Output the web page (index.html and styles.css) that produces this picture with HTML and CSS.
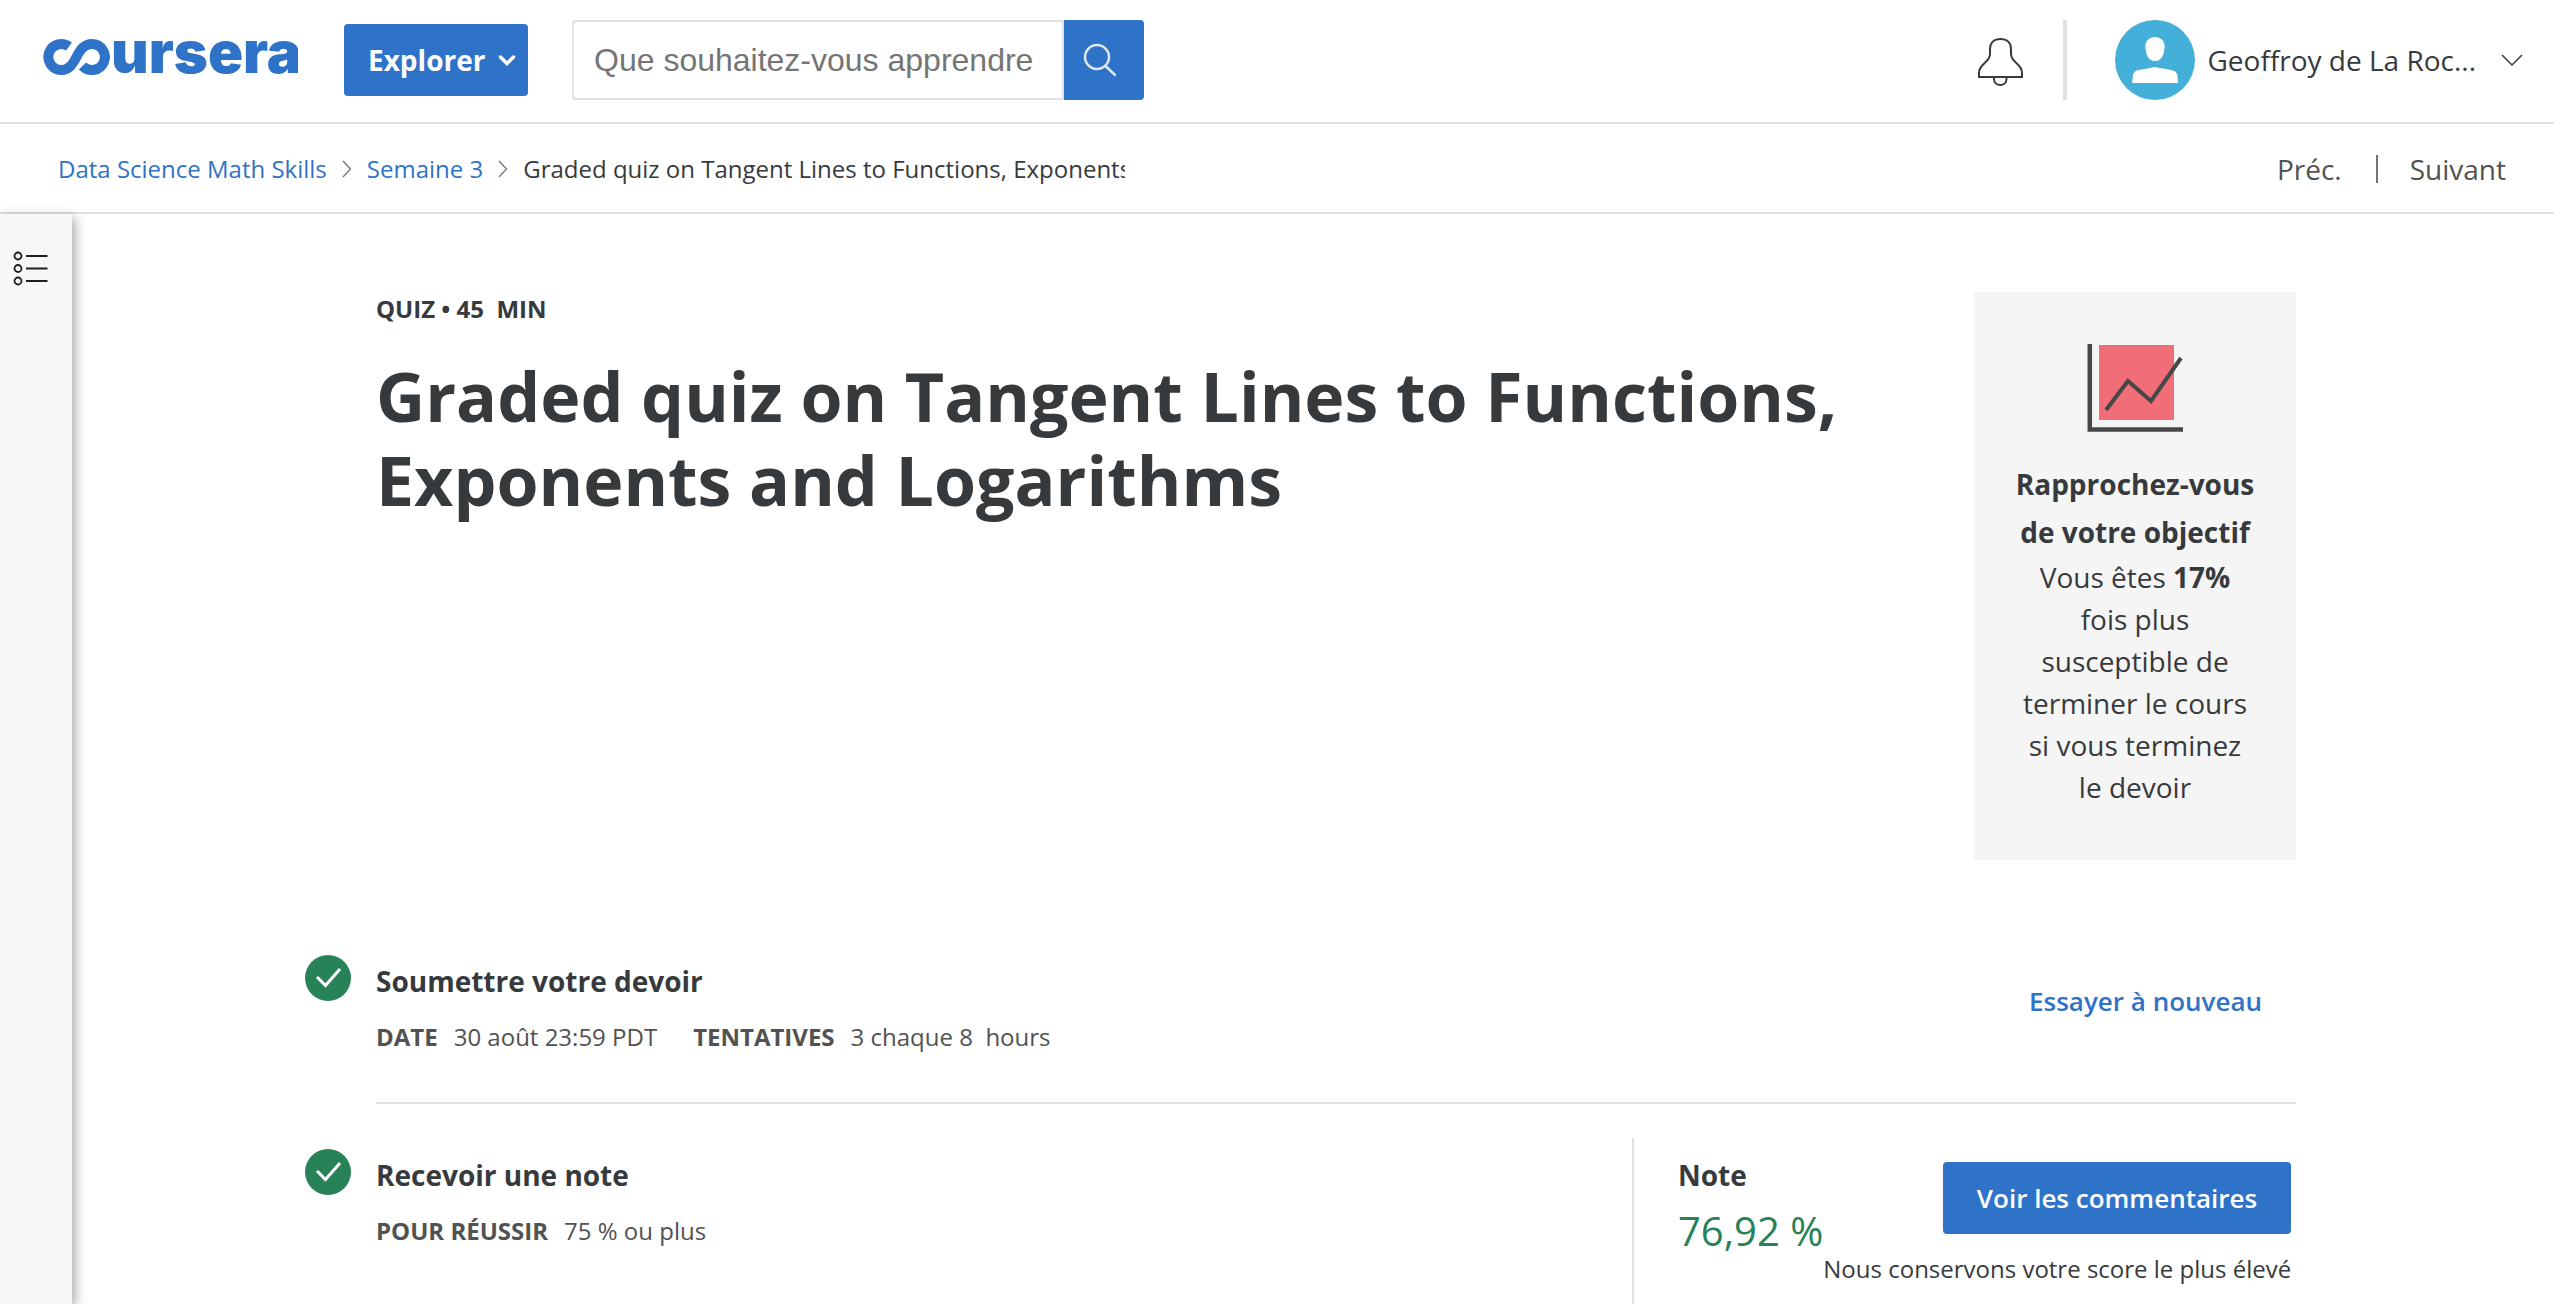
FILE: index.html
```html
<!DOCTYPE html>
<html lang="fr">
<head>
<meta charset="utf-8">
<meta name="viewport" content="width=device-width, initial-scale=1">
<title>Graded quiz on Tangent Lines to Functions, Exponents and Logarithms | Coursera</title>
<link rel="stylesheet" href="styles.css">
</head>
<body>
<header class="topbar">
  <a class="logo" href="#" aria-label="Coursera">
    <svg width="256" height="106" viewBox="0 -30 256 106" aria-hidden="true">
      <path d="M27 9.500A13 13 0 1 0 19 33C36 33 33 7 50 7A13 13 0 1 1 40.500 29" fill="none" stroke="#2f73c9" stroke-width="10"/>
      <text class="logo-text" x="69" y="36">ursera</text>
    </svg>
  </a>
  <button class="button explore" type="button">Explorer
    <svg width="18" height="14" viewBox="0 0 18 14" aria-hidden="true"><path d="M2.500 4L9 10.500L15.500 4" fill="none" stroke="#fff" stroke-width="3.500" stroke-linecap="round"/></svg>
  </button>
  <form class="search">
    <input class="search-input" type="text" aria-label="Rechercher" placeholder="Que souhaitez-vous apprendre">
    <button class="search-button" type="submit" aria-label="Lancer la recherche">
      <svg width="36" height="36" viewBox="0 0 36 36" aria-hidden="true"><g fill="none" stroke="#dfe6ee" stroke-width="2.500" stroke-linecap="round"><circle cx="15" cy="15" r="12"/><path d="M23.500 24L33 33"/></g></svg>
    </button>
  </form>
  <div class="account">
    <button class="icon-button" type="button" aria-label="Notifications">
      <svg width="46" height="54" viewBox="0 -4 46 54" aria-hidden="true"><g fill="none" stroke="#373a3c" stroke-width="2"><path d="M2 40V36C2 26 13 26 13 17V12C13 5.500 17.500 2 23.500 2S34 5.500 34 12V17C34 26 45 26 45 36V40Z"/><path d="M17 40V42C17 50 29.500 50 29.500 42V40"/></g></svg>
    </button>
    <button class="profile" type="button">
      <svg width="80" height="80" viewBox="0 0 80 80" aria-hidden="true"><circle cx="40" cy="40" r="40" fill="#44afd9"/><g fill="#fff"><path d="M40 17C46.500 17 50.500 22 49.500 28C49 35 46.500 41 40 41S31 35 30.500 28C29.500 22 33.500 17 40 17Z"/><path d="M17 63L18 55.500C18.500 52.500 20 50.500 24 50L40 47L56 50C60 50.500 62 52.500 62.500 55.500L63 63Z"/></g></svg>
      <span>Geoffroy de La Roc...</span>
      <svg class="profile-chevron" width="24" height="14" viewBox="0 0 24 14" aria-hidden="true"><path d="M2 2L12 12L22 2" fill="none" stroke="#373a3c" stroke-width="1.500"/></svg>
    </button>
  </div>
</header>
<div class="subbar">
  <nav class="breadcrumb" aria-label="Fil d'Ariane">
    <a href="#">Data Science Math Skills</a>
    <svg width="10" height="18" viewBox="0 0 10 18" aria-hidden="true"><path d="M1 1L8.500 9L1 17" fill="none" stroke="#757575" stroke-width="1.300"/></svg>
    <a href="#">Semaine 3</a>
    <svg width="10" height="18" viewBox="0 0 10 18" aria-hidden="true"><path d="M1 1L8.500 9L1 17" fill="none" stroke="#757575" stroke-width="1.300"/></svg>
    <span class="current">Graded quiz on Tangent Lines to Functions, Exponents and Logarithms</span>
  </nav>
  <nav class="pager" aria-label="Navigation du cours">
    <a href="#">Préc.</a>
    <a class="next" href="#">Suivant</a>
  </nav>
</div>
<div class="body">
  <aside class="rail">
    <button class="icon-button" type="button" aria-label="Plan du cours">
      <svg width="36" height="36" viewBox="0 0 36 36" aria-hidden="true"><g fill="none" stroke="#1f1f1f" stroke-width="1.800"><circle cx="5" cy="5" r="3.500"/><circle cx="5" cy="17.500" r="3.500"/><circle cx="5" cy="30" r="3.500"/><path d="M13 5H34.500M13 17.500H34.500M13 30H34.500"/></g></svg>
    </button>
  </aside>
  <main class="content">
    <section class="intro">
      <div>
        <p class="kind">QUIZ • 45 &nbsp;MIN</p>
        <h1 class="title">Graded quiz on Tangent Lines to Functions, Exponents and Logarithms</h1>
      </div>
      <div class="goal">
        <svg width="96" height="88" viewBox="0 0 96 88" aria-hidden="true"><path d="M12 1H87V76H12Z" fill="#f16d78"/><g fill="none" stroke="#474747" stroke-width="4.500"><path d="M2.800 0V85.500H96"/><path d="M19 66L41 37L64 57L94 14" stroke-width="4"/></g></svg>
        <h2 class="goal-title">Rapprochez-vous de votre objectif</h2>
        <p class="goal-text">Vous êtes <strong>17%</strong> fois plus susceptible de terminer le cours si vous terminez le devoir</p>
      </div>
    </section>
    <section class="step">
      <svg class="check" width="48" height="48" viewBox="0 0 48 48" aria-hidden="true"><circle cx="24" cy="24" r="23" fill="#278257"/><path d="M13 23L21.500 31.500L36 15" fill="none" stroke="#fff" stroke-width="3"/></svg>
      <div class="step-body divided">
        <div class="step-info">
          <h2 class="step-title">Soumettre votre devoir</h2>
          <dl class="facts">
            <div><dt>DATE</dt><dd>30 août 23:59 PDT</dd></div>
            <div><dt>TENTATIVES</dt><dd>3 chaque 8 &nbsp;hours</dd></div>
          </dl>
        </div>
        <button class="button retry" type="button">Essayer à nouveau</button>
      </div>
    </section>
    <section class="step last">
      <svg class="check" width="48" height="48" viewBox="0 0 48 48" aria-hidden="true"><circle cx="24" cy="24" r="23" fill="#278257"/><path d="M13 23L21.500 31.500L36 15" fill="none" stroke="#fff" stroke-width="3"/></svg>
      <div class="step-body">
        <div class="step-info">
          <h2 class="step-title">Recevoir une note</h2>
          <dl class="facts">
            <div><dt>POUR RÉUSSIR</dt><dd>75 % ou plus</dd></div>
          </dl>
        </div>
        <div class="grade">
          <div>
            <h2 class="step-title">Note</h2>
            <p class="score">76,92 %</p>
          </div>
          <div class="feedback">
            <button class="button primary" type="button">Voir les commentaires</button>
            <p class="keep">Nous conservons votre score le plus élevé</p>
          </div>
        </div>
      </div>
    </section>
  </main>
</div>
</body>
</html>
```
FILE: styles.css
```css
* {
  box-sizing: border-box;
}

body {
  margin: 0;
  min-height: 100vh;
  display: flex;
  flex-direction: column;
  background: #fff;
  color: #373a3c;
  font: 24px/36px "Open Sans", "Noto Sans", sans-serif;
}

h1, h2, p, dl, dd {
  margin: 0;
}

svg {
  display: block;
  flex: none;
}

a {
  color: #2f73c9;
  text-decoration: none;
}

button {
  margin: 0;
  padding: 0;
  border: 0;
  background: none;
  color: inherit;
  font: inherit;
  cursor: pointer;
}

/* Top bar */
.topbar {
  display: flex;
  align-items: center;
  height: 124px;
  padding: 0 30px 2px 42px;
  border-bottom: 2px solid #e1e1e1;
}

.logo-text {
  fill: #2f73c9;
  font: 900 58px Inter, sans-serif;
}

.button {
  height: 72px;
  border-radius: 4px;
  font-size: 26px;
  font-weight: 600;
  line-height: 42px;
  white-space: nowrap;
}

.explore {
  display: flex;
  align-items: center;
  justify-content: space-between;
  width: 184px;
  margin-left: 46px;
  padding: 0 12px 0 24px;
  background: #2f73c9;
  color: #fff;
  font-size: 28px;
  font-weight: 700;
}

.search {
  display: flex;
  width: 572px;
  height: 80px;
  margin-left: 44px;
}

.search-input {
  flex: 1;
  min-width: 0;
  padding: 0 20px;
  border: 2px solid #e1e1e1;
  border-radius: 4px 0 0 4px;
  background: #fff;
  color: #373a3c;
  font: 32px "Liberation Sans", sans-serif;
}

.search-input::placeholder {
  color: #757575;
  opacity: 1;
}

.search-button {
  display: flex;
  align-items: center;
  justify-content: center;
  width: 80px;
  padding-right: 8px;
  border-radius: 0 4px 4px 0;
  background: #2f73c9;
}

.account {
  display: flex;
  align-items: center;
  margin-left: auto;
}

.profile {
  display: flex;
  align-items: center;
  gap: 12px;
  height: 80px;
  margin-left: 40px;
  padding-left: 48px;
  border-left: 4px solid #e1e1e1;
  font-size: 28px;
  white-space: nowrap;
}

.profile-chevron {
  margin-left: 12px;
}

/* Breadcrumb bar */
.subbar {
  display: flex;
  align-items: center;
  justify-content: space-between;
  height: 90px;
  padding: 2px 48px 0 58px;
  border-bottom: 2px solid #e1e1e1;
}

.breadcrumb {
  display: flex;
  align-items: center;
  gap: 15px;
  width: 1067px;
  overflow: hidden;
  white-space: nowrap;
}

.current {
  overflow: hidden;
}

.pager {
  display: flex;
  align-items: center;
  font-size: 28px;
  line-height: 28px;
}

.pager a {
  color: #525252;
}

.pager .next {
  margin-left: 34px;
  padding-left: 32px;
  border-left: 2px solid #757575;
}

/* Page body */
.body {
  display: flex;
  flex: 1;
}

.rail {
  flex: none;
  width: 72px;
  padding: 37px 13px;
  background: #f7f7f7;
  box-shadow: 2px 4px 12px rgba(0, 0, 0, 0.4);
}

.content {
  display: flex;
  flex: 1;
  flex-direction: column;
  padding: 78px 258px 0 232px;
}

.intro {
  display: grid;
  grid-template-columns: 1fr 322px;
  gap: 40px;
  padding-left: 72px;
}

.kind {
  font-weight: 700;
  line-height: 34px;
}

.title {
  margin-top: 28px;
  font-size: 68px;
  font-weight: 700;
  line-height: 84px;
}

.goal {
  display: flex;
  flex-direction: column;
  align-items: center;
  padding: 52px 40px;
  background: #f5f5f5;
  font-size: 28px;
  text-align: center;
}

.goal-title {
  margin-top: 28px;
  font-size: 28px;
  font-weight: 700;
  line-height: 48px;
}

.goal-text {
  line-height: 42px;
}

/* Steps */
.step {
  display: grid;
  grid-template-columns: 72px 1fr;
  margin-top: 94px;
}

.step-body {
  display: flex;
  justify-content: space-between;
}

.step-info {
  padding-top: 6px;
}

.divided {
  padding-bottom: 47px;
  border-bottom: 2px solid #e1e1e1;
}

.step-title {
  font-size: 28px;
  font-weight: 700;
  line-height: 42px;
}

.facts {
  display: flex;
  gap: 36px;
  margin-top: 17px;
  color: #525252;
}

.facts div {
  display: flex;
  gap: 16px;
}

.facts dt {
  font-weight: 700;
}

.retry {
  margin-top: 11px;
  padding: 0 34px;
  color: #2f73c9;
}

.last {
  flex: 1;
  margin-top: 0;
  padding-top: 34px;
}

.last .check {
  margin-top: 10px;
}

.last .step-info {
  padding-top: 16px;
}

.grade {
  display: flex;
  justify-content: space-between;
  width: 664px;
  padding: 16px 6px 0 44px;
  border-left: 2px solid #e1e1e1;
  white-space: nowrap;
}

.score {
  margin-top: 7px;
  color: #278257;
  font-size: 40px;
  line-height: 56px;
}

.feedback {
  display: flex;
  flex-direction: column;
  align-items: flex-end;
  padding-top: 8px;
}

.primary {
  padding: 0 34px;
  background: #2f73c9;
  color: #fff;
}

.keep {
  margin-top: 17px;
}
```
